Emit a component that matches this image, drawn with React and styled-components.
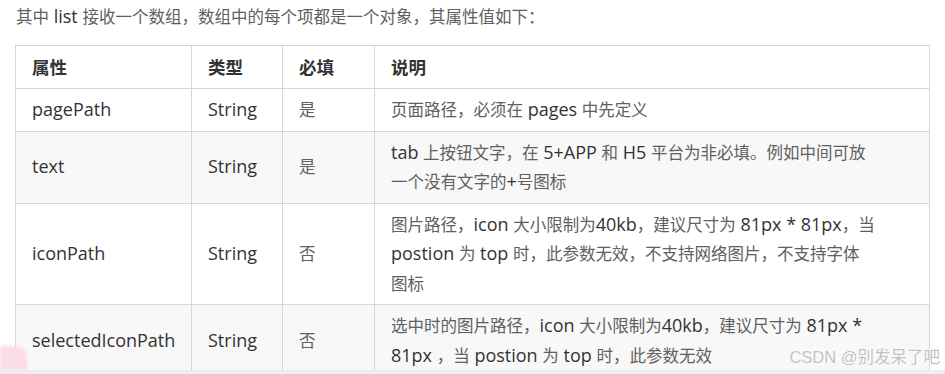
import React from "react";
import styled, { createGlobalStyle } from "styled-components";

const Global = createGlobalStyle`
  html, body { margin: 0; padding: 0; background: #fff; }
  body { overflow: hidden; height: 374px; }
  #root { height: 374px; }
`;

const Page = styled.div`
  position: relative;
  height: 374px;
  overflow: hidden;
  padding: 1px 0 0 15px;
  box-sizing: border-box;
  font-family: "Open Sans", "Noto Sans CJK SC", sans-serif;
  font-size: 18px;
  color: #333;
`;

const Intro = styled.p`
  margin: 0 0 14px 1px;
  line-height: 30px;
  white-space: nowrap;
`;

const Han = styled.span`
  font-family: "Noto Sans CJK SC", sans-serif;
  font-size: ${(p) => (p.$head ? "17.5px" : "16.5px")};
  color: ${(p) => (p.$head ? "#333" : "#606060")};
  font-weight: ${(p) => (p.$head ? 700 : 400)};
`;

const Table = styled.table`
  border-collapse: collapse;
  table-layout: fixed;
  width: 914px;
  border: 1px solid #d6d6d6;
`;

const Row = styled.tr`
  background: ${(p) => (p.$striped ? "#f8f8f8" : "#fff")};
`;

const HeadCell = styled.th`
  text-align: left;
  font-weight: 700;
  padding: 6px 16px;
  line-height: 30px;
  border: 1px solid #d6d6d6;
`;

const Cell = styled.td`
  padding: 6px 16px;
  line-height: 29.5px;
  border: 1px solid #d6d6d6;
  vertical-align: middle;
  white-space: nowrap;
`;

const Line = styled.span`
  display: block;
  white-space: nowrap;
`;

const Watermark = styled.div`
  position: absolute;
  right: 5px;
  bottom: 6px;
  font-family: "Liberation Sans", "Noto Sans CJK SC", sans-serif;
  font-size: 16.5px;
  color: #c2c2c2;
  text-shadow: 0 0 2px #fff, 0 0 2px #fff;
`;

const BottomBand = styled.div`
  position: absolute;
  left: 0;
  right: 0;
  bottom: 0;
  height: 4px;
  background: #eeeeee;
`;

const PinkBlob = styled.div`
  position: absolute;
  left: 0;
  bottom: 4px;
  width: 27px;
  height: 24px;
  background: #fbdce8;
  border-radius: 0 10px 0 0;
  filter: blur(1.5px);
`;

const CJK = /([\u3000-\u303f\u4e00-\u9fff\uff00-\uffef]+)/;

function Mixed({ text, head }) {
  return text.split(CJK).map((part, i) =>
    i % 2 === 1 ? (
      <Han key={i} $head={head}>
        {part}
      </Han>
    ) : (
      <React.Fragment key={i}>{part}</React.Fragment>
    )
  );
}

const headers = ["属性", "类型", "必填", "说明"];

const rows = [
  { name: "pagePath", type: "String", req: "是", desc: ["页面路径，必须在 pages 中先定义"] },
  {
    name: "text",
    type: "String",
    req: "是",
    desc: ["tab 上按钮文字，在 5+APP 和 H5 平台为非必填。例如中间可放", "一个没有文字的+号图标"],
  },
  {
    name: "iconPath",
    type: "String",
    req: "否",
    desc: [
      "图片路径，icon 大小限制为40kb，建议尺寸为 81px * 81px，当",
      "postion 为 top 时，此参数无效，不支持网络图片，不支持字体",
      "图标",
    ],
  },
  {
    name: "selectedIconPath",
    type: "String",
    req: "否",
    desc: ["选中时的图片路径，icon 大小限制为40kb，建议尺寸为 81px *", "81px ，当 postion 为 top 时，此参数无效"],
  },
];

export default function App() {
  return (
    <>
      <Global />
      <Page>
        <Intro>
          <Mixed text="其中 list 接收一个数组，数组中的每个项都是一个对象，其属性值如下：" />
        </Intro>
        <Table>
          <colgroup>
            <col style={{ width: 176 }} />
            <col style={{ width: 91 }} />
            <col style={{ width: 92 }} />
            <col style={{ width: 555 }} />
          </colgroup>
          <thead>
            <Row>
              {headers.map((h) => (
                <HeadCell key={h}>
                  <Mixed text={h} head />
                </HeadCell>
              ))}
            </Row>
          </thead>
          <tbody>
            {rows.map((r, i) => (
              <Row key={r.name} $striped={i % 2 === 1}>
                <Cell>{r.name}</Cell>
                <Cell>{r.type}</Cell>
                <Cell>
                  <Mixed text={r.req} />
                </Cell>
                <Cell>
                  {r.desc.map((l) => (
                    <Line key={l}>
                      <Mixed text={l} />
                    </Line>
                  ))}
                </Cell>
              </Row>
            ))}
          </tbody>
        </Table>
        <PinkBlob />
        <BottomBand />
        <Watermark>CSDN @别发呆了吧</Watermark>
      </Page>
    </>
  );
}
